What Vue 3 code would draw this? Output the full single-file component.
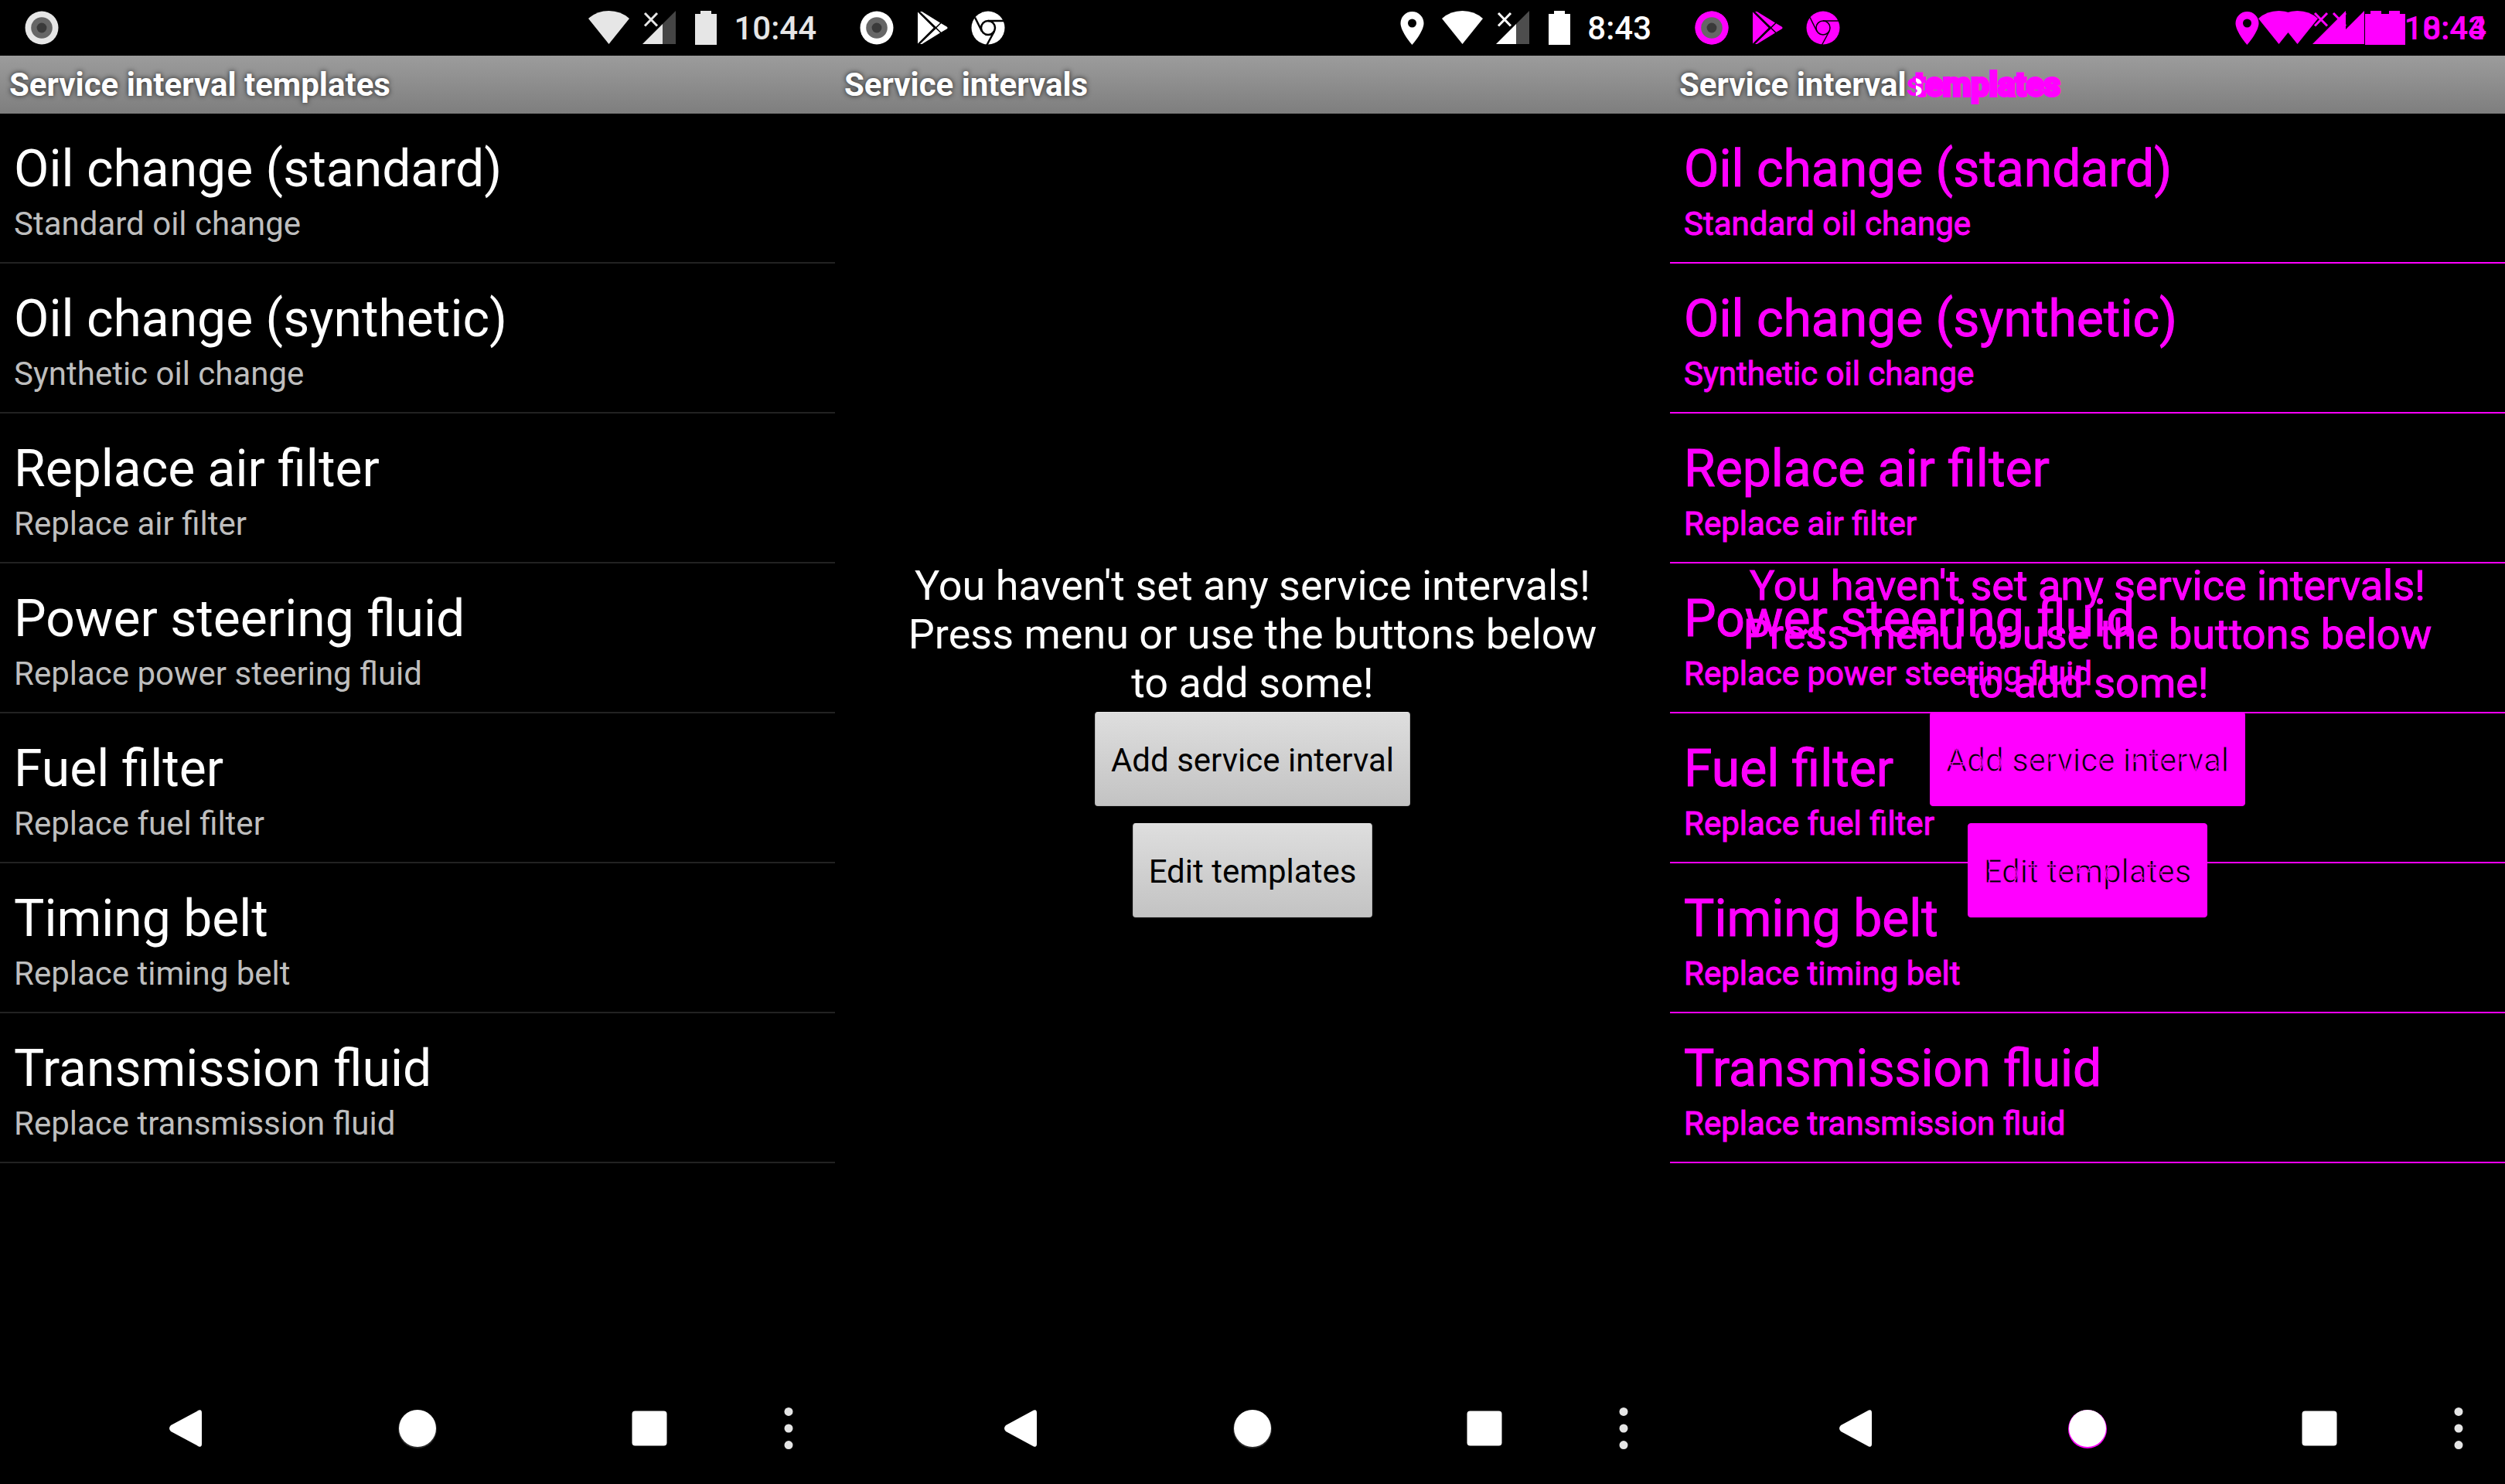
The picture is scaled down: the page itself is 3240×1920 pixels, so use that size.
<script setup>
import { h } from 'vue'

const templates = [
  { name: 'Oil change (standard)', note: 'Standard oil change' },
  { name: 'Oil change (synthetic)', note: 'Synthetic oil change' },
  { name: 'Replace air filter', note: 'Replace air filter' },
  { name: 'Power steering fluid', note: 'Replace power steering fluid' },
  { name: 'Fuel filter', note: 'Replace fuel filter' },
  { name: 'Timing belt', note: 'Replace timing belt' },
  { name: 'Transmission fluid', note: 'Replace transmission fluid' }
]

const screens = [
  { id: 'templates', bars: [{ time: '10:44', apps: false }], list: true, empty: false },
  { id: 'intervals', bars: [{ time: '8:43', apps: true }], list: false, empty: true },
  {
    id: 'diff',
    bars: [{ time: '10:44', apps: false }, { time: '8:43', apps: true }],
    list: true,
    empty: true
  }
]

const shapes = {
  record: [72, 72, [
    ['circle', { class: 'ink', cx: 36, cy: 36, r: 21.5 }],
    ['circle', { fill: '#666', cx: 36, cy: 36, r: 13.8 }],
    ['circle', { fill: '#3a3a3a', cx: 36, cy: 36, r: 6.4 }]
  ]],
  play: [72, 72, [
    ['path', { class: 'ink', d: 'M17 15.5 37.6 36 17 56.5Z M20 15 22.5 15 46 29.5 40.5 34.8Z M20 57 22.5 57 46 42.5 40.5 37.2Z M47.3 30.2 54.5 34.4Q56.6 36 54.5 37.6L47.3 41.8 41.5 36Z' }]
  ]],
  chrome: [72, 72, [
    ['circle', { class: 'ink', cx: 36, cy: 36, r: 21.5 }],
    ['path', { class: 'cut', d: 'M36 27H58 M19 22.5 28 40.5 M44 40.5 34 59' }],
    ['circle', { class: 'cut', cx: 36, cy: 36, r: 9 }]
  ]],
  pin: [31, 72, [
    ['path', { class: 'ink', 'fill-rule': 'evenodd', d: 'M15.5 15A15 15 0 0 0 .5 30C.5 41 15.5 58 15.5 58S30.5 41 30.5 30A15 15 0 0 0 15.5 15ZM15.5 24.5A5.5 5.5 0 1 1 15.5 35.5 5.5 5.5 0 0 1 15.5 24.5Z' }]
  ]],
  wifi: [53, 72, [
    ['path', { class: 'ink', d: 'M26.5 57 0 24Q11 14 26.5 14T53 24Z' }]
  ]],
  signal: [43, 72, [
    ['path', { class: 'dim', d: 'M43 14V57H26V31Z' }],
    ['path', { class: 'ink', d: 'M26 31V57H0Z' }],
    ['path', { class: 'cross', d: 'M3 17 19 33.5M19 17 3 33.5' }]
  ]],
  battery: [28, 72, [
    ['path', { class: 'ink', d: 'M0 18H7V14H21V18H28V58H0Z' }]
  ]]
}

const Glyph = (props) => {
  const [w, ht, parts] = shapes[props.name]
  return h(
    'svg',
    { width: w, height: ht, viewBox: `0 0 ${w} ${ht}`, 'aria-hidden': 'true' },
    parts.map(([tag, attrs]) => h(tag, attrs))
  )
}
Glyph.props = ['name']
</script>

<template>
  <main class="board">
    <section v-for="s in screens" :key="s.id" class="screen" :class="s.id">
      <div class="stack">
        <div v-for="b in s.bars" :key="b.time" class="status">
          <Glyph name="record" />
          <template v-if="b.apps">
            <Glyph name="play" />
            <Glyph name="chrome" />
          </template>
          <span class="spacer"></span>
          <Glyph v-if="b.apps" class="pin" name="pin" />
          <Glyph class="wifi" name="wifi" />
          <Glyph class="signal" name="signal" />
          <Glyph class="battery" name="battery" />
          <time>{{ b.time }}</time>
        </div>
      </div>

      <header class="stack title">
        <h1 v-if="s.list">Service interval <span class="changed">templates</span></h1>
        <h1 v-if="s.empty"><span class="common">Service interval</span><span class="plural">s</span></h1>
      </header>

      <div class="stack body">
        <ul v-if="s.list">
          <li v-for="t in templates" :key="t.name">
            <span class="name">{{ t.name }}</span>
            <span class="note">{{ t.note }}</span>
          </li>
        </ul>
        <div v-if="s.empty" class="empty">
          <p>You haven't set any service intervals! Press menu or use the buttons below to add some!</p>
          <button type="button" class="action">Add service interval</button>
          <button type="button" class="action">Edit templates</button>
        </div>
      </div>

      <nav>
        <button type="button" class="back" aria-label="Back">
          <svg width="48" height="48" viewBox="0 0 48 48"><path d="M41 .6Q45 -1 45 4V44Q45 49 41 47.4L5 28Q1 24 5 20Z" /></svg>
        </button>
        <button type="button" aria-label="Home">
          <svg width="56" height="56" viewBox="0 0 56 56"><circle class="halo" cx="28" cy="29" r="25" /><circle cx="28" cy="28" r="24" /></svg>
        </button>
        <button type="button" aria-label="Recent apps">
          <svg width="46" height="46" viewBox="0 0 46 46"><rect width="45" height="45" x=".5" y=".5" rx="4" /></svg>
        </button>
        <button type="button" class="more" aria-label="More options">
          <svg width="12" height="56" viewBox="0 0 12 56"><circle cx="6" cy="6.4" r="5.5" /><circle cx="6" cy="28" r="5.5" /><circle cx="6" cy="49.6" r="5.5" /></svg>
        </button>
      </nav>
    </section>
  </main>
</template>

<style>
body {
  margin: 0;
  background: #000;
}
</style>

<style scoped>
.board {
  display: grid;
  grid-template-columns: repeat(3, minmax(0, 1fr));
  min-height: 100vh;
  background: #000;
  font-family: Roboto, "Liberation Sans", sans-serif;
  color: #fff;
}
.screen {
  --ink: #fff;
  --dim: #4d4d4d;
  --cut: 2.5px;
  display: flex;
  flex-direction: column;
}
.templates {
  --ink: #e6e6e6;
  --dim: #454545;
}
.diff {
  --ink: #f0f;
  --dim: #f0f;
  --cut: 1.5px;
}
.stack {
  display: grid;
}
.stack > * {
  grid-area: 1 / 1;
}

.status {
  display: flex;
  align-items: center;
  height: 72px;
  padding: 0 24px 0 18px;
}
.status svg {
  flex: none;
}
.status :deep(.ink) {
  fill: var(--ink);
}
.status :deep(.dim) {
  fill: var(--dim);
}
.status :deep(.cut) {
  fill: none;
  stroke: #000;
  stroke-width: var(--cut);
}
.status :deep(.cross) {
  fill: none;
  stroke: var(--ink);
  stroke-width: 3;
}
.spacer {
  flex: 1;
}
.pin {
  margin-right: 23px;
}
.wifi {
  margin-right: 17px;
}
.signal {
  margin-right: 25px;
}
.battery {
  margin-right: 22px;
}
time {
  padding-top: 2px;
  font-size: 42px;
  font-weight: 500;
  line-height: 50px;
  color: var(--ink);
}

.title {
  align-items: center;
  height: 75px;
  padding: 0 12px;
  background: linear-gradient(#9c9c9c, #7e7e7e);
}
h1 {
  margin: 0;
  font-size: 42px;
  font-weight: 700;
  line-height: 49px;
  text-shadow: 0 0 6px #222;
}
.diff .changed {
  color: #f0f;
  -webkit-text-stroke: 4px #f0f;
  text-shadow: none;
}
.diff .plural {
  background: linear-gradient(90deg, #f0f 55%, #fff 55%);
  background-clip: text;
  color: transparent;
  text-shadow: none;
}
.diff .common {
  visibility: hidden;
}

.body {
  flex: 1;
}
ul {
  margin: 0;
  padding: 0;
  list-style: none;
}
li {
  display: flex;
  flex-direction: column;
  gap: 8px;
  padding: 33px 18px 25px;
  border-bottom: 2px solid #222;
}
.name {
  font-size: 66px;
  line-height: 77px;
}
.note {
  font-size: 42px;
  line-height: 49px;
  color: #bebebe;
}
.empty {
  display: flex;
  flex-direction: column;
  align-items: center;
  justify-content: center;
  gap: 22px;
  padding: 0 84px 10px;
}
p {
  margin: 0 0 -16px;
  font-size: 54px;
  line-height: 63px;
  text-align: center;
}
.action {
  height: 122px;
  padding: 2px 20px 0;
  border: 1px solid #b5b5b5;
  border-top-color: #e8e8e8;
  border-radius: 4px;
  background: linear-gradient(#dedede, #c3c3c3);
  font: 42px/49px Roboto, "Liberation Sans", sans-serif;
  color: #000;
}
.diff li {
  border-color: #f0f;
}
.diff .name,
.diff .note,
.diff p {
  color: #f0f;
  -webkit-text-stroke: 1px #f0f;
}
.diff .action {
  border-color: #f0f;
  background: #f0f;
  -webkit-text-stroke: 1px #f0f;
}

nav {
  display: grid;
  grid-template-columns: 10fr 10fr 10fr 2fr;
  height: 144px;
  padding: 0 2.7778% 0 8.3333%;
}
nav button {
  display: flex;
  align-items: center;
  justify-content: center;
  padding: 0;
  border: 0;
  background: none;
}
nav svg {
  fill: #fff;
}
nav .more svg {
  fill: #e5e5e5;
}
.halo {
  fill: #2a2a2a;
}
.diff .halo {
  fill: #f0f;
}
</style>
